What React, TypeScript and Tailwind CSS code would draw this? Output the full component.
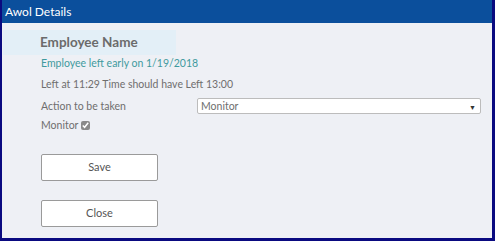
import * as React from 'react'

export default function App() {
  const [action, setAction] = React.useState('Monitor')
  const [monitor, setMonitor] = React.useState(true)

  return (
    <div
      className="flex h-[241px] w-[495px] flex-col border-b-[3px] border-l-2 border-r-[3px] border-[#0a0a80] bg-[#eef0f5] text-[10.5px] text-[#6e6e6e]"
      style={{ fontFamily: 'Lato, "Liberation Sans", sans-serif' }}
    >
      <header className="flex h-[23px] shrink-0 items-center bg-[#0b4f9c] pl-[3px] text-[12px] text-white">
        Awol Details
      </header>

      <div className="mt-[7px] ml-px flex h-[25px] w-[173px] items-center bg-[#e3eff7] pl-[37px] text-[13.5px] font-bold text-[#6b6b6b]">
        Employee Name
      </div>

      <div className="flex flex-col pl-[39px]">
        <p className="mt-[1px] leading-[14px] text-[#3f9a9e]">Employee left early on 1/19/2018</p>
        <p className="mt-[7px] leading-[14px]">Left at 11:29 Time should have Left 13:00</p>

        <div className="mt-[7px] flex items-center">
          <span className="w-[156px] leading-[14px]">Action to be taken</span>
          <div className="relative h-[16px] w-[284px] rounded-[2px] border border-[#bcbcbc] bg-white">
            <select
              value={action}
              onChange={(e) => setAction(e.target.value)}
              className="h-full w-full appearance-none bg-transparent pl-[3px] text-[10.5px] leading-[14px] text-[#6e6e6e] outline-none"
            >
              <option>Monitor</option>
              <option>Warning</option>
              <option>Dismiss</option>
            </select>
            <span className="pointer-events-none absolute right-[4px] top-[3px] text-[7px] text-[#333]">▼</span>
          </div>
        </div>

        <label className="mt-[4px] flex items-center gap-[3px] leading-[14px]">
          Monitor
          <input
            type="checkbox"
            checked={monitor}
            onChange={(e) => setMonitor(e.target.checked)}
            className="h-[9px] w-[9px] accent-[#8a8a8a]"
          />
        </label>

        <button className="mt-[22px] h-[27px] w-[117px] rounded-[2px] border border-[#9a9a9a] bg-white text-[11px] text-[#555]">
          Save
        </button>
        <button className="mt-[19px] h-[27px] w-[117px] rounded-[2px] border border-[#9a9a9a] bg-white text-[11px] text-[#555]">
          Close
        </button>
      </div>
    </div>
  )
}
